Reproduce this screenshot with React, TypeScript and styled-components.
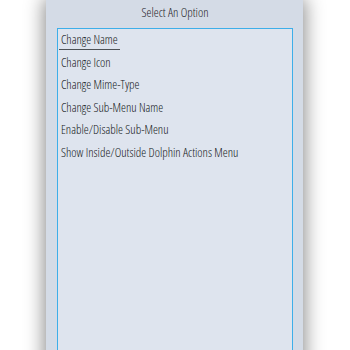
import React from "react";
import styled, { createGlobalStyle } from "styled-components";

const Global = createGlobalStyle`
  html, body { margin: 0; padding: 0; background: #ffffff; overflow: hidden; }
  body { font-family: "Open Sans", "Noto Sans", sans-serif; font-stretch: condensed; font-weight: 300; }
`;

const Page = styled.div`
  width: 350px;
  height: 350px;
  display: flex;
  padding-left: 46px;
  box-sizing: border-box;
  overflow: hidden;
`;

const Window = styled.div`
  width: 257px;
  height: 380px;
  background: #d4dbe6;
  box-shadow: 0 0 18px 2px rgba(0, 0, 0, 0.45);
  display: flex;
  flex-direction: column;
  padding: 0 10px 0 11px;
  box-sizing: border-box;
`;

const Title = styled.div`
  height: 28px;
  display: flex;
  align-items: center;
  justify-content: center;
  font-size: 12.5px;
  color: #1f2326;
  padding-bottom: 3px;
  box-sizing: border-box;
`;

const List = styled.div`
  flex: 1;
  border: 1px solid #3daee9;
  background: #dee4ee;
  padding-top: 1px;
  display: flex;
  flex-direction: column;
`;

const Row = styled.div`
  height: 22.5px;
  display: flex;
  align-items: center;
  padding-left: 1px;
  font-size: 12.5px;
  color: #15181a;
  white-space: nowrap;
`;

const Label = styled.span<{ $current?: boolean }>`
  padding: 0 2px 1px 2px;
  border-bottom: 1px solid ${(p) => (p.$current ? "#4d5257" : "transparent")};
  line-height: 16px;
`;

const items = [
  "Change Name",
  "Change Icon",
  "Change Mime-Type",
  "Change Sub-Menu Name",
  "Enable/Disable Sub-Menu",
  "Show Inside/Outside Dolphin Actions Menu",
];

export default function App() {
  return (
    <>
      <Global />
      <Page>
        <Window>
          <Title>Select An Option</Title>
          <List>
            {items.map((t, i) => (
              <Row key={t}>
                <Label $current={i === 0}>{t}</Label>
              </Row>
            ))}
          </List>
        </Window>
      </Page>
    </>
  );
}
